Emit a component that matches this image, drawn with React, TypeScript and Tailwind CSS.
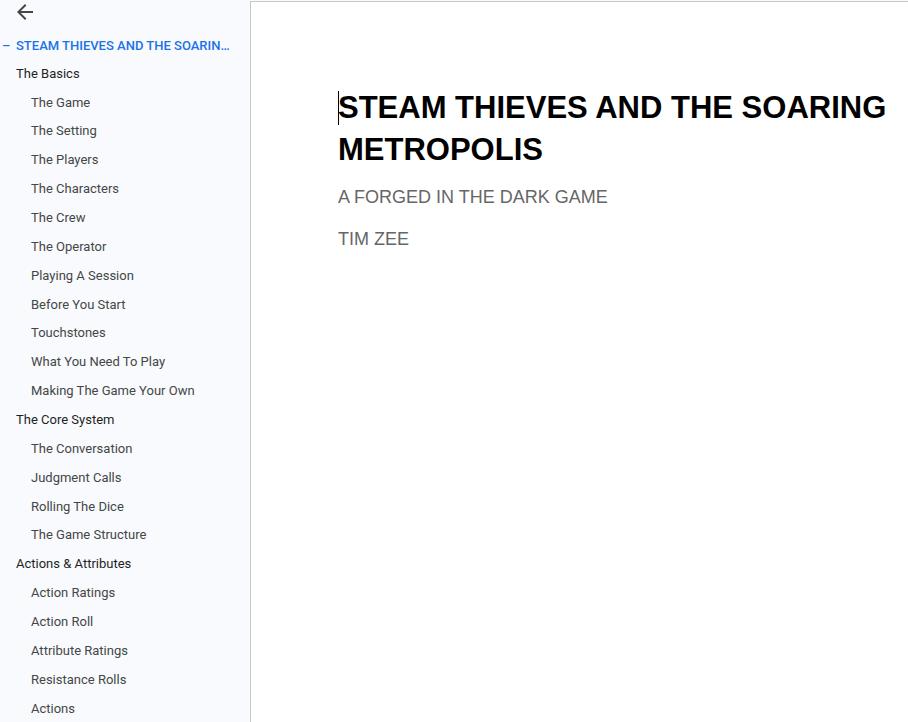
import React from "react";

const items: [number, string][] = [
  [1, "The Basics"],
  [2, "The Game"],
  [2, "The Setting"],
  [2, "The Players"],
  [2, "The Characters"],
  [2, "The Crew"],
  [2, "The Operator"],
  [2, "Playing A Session"],
  [2, "Before You Start"],
  [2, "Touchstones"],
  [2, "What You Need To Play"],
  [2, "Making The Game Your Own"],
  [1, "The Core System"],
  [2, "The Conversation"],
  [2, "Judgment Calls"],
  [2, "Rolling The Dice"],
  [2, "The Game Structure"],
  [1, "Actions & Attributes"],
  [2, "Action Ratings"],
  [2, "Action Roll"],
  [2, "Attribute Ratings"],
  [2, "Resistance Rolls"],
  [2, "Actions"],
];

export default function App() {
  return (
    <div className="flex h-[722px] w-[908px] overflow-hidden bg-[#f8fafd]">
      <aside className="w-[250px] shrink-0 overflow-hidden font-['Roboto',sans-serif] text-[13px] text-[#444746]">
        <div className="flex h-[24px] items-center pl-[13px]">
          <svg width="24" height="24" viewBox="0 0 24 24" fill="#444746">
            <path d="M20 11H7.83l5.59-5.59L12 4l-8 8 8 8 1.41-1.41L7.83 13H20v-2z" />
          </svg>
        </div>
        <div className="mt-[8px] flex h-[27px] items-center font-medium text-[#1a73e8]">
          <span className="w-[16px] pl-[2px]">–</span>
          <span className="whitespace-nowrap">STEAM THIEVES AND THE SOARIN…</span>
        </div>
        {items.map(([lvl, t], i) => (
          <div
            key={i}
            className={
              "flex h-[28.86px] items-center whitespace-nowrap " +
              (lvl === 1 ? "pl-[16px] text-[#1f1f1f]" : "pl-[31px]")
            }
          >
            {t}
          </div>
        ))}
      </aside>
      <main className="flex-1 pt-[1px]">
        <div className="h-full border-l border-t border-[#c7c7c7] bg-white pl-[87px] pt-[85px] font-['Liberation_Sans',Arial,sans-serif]">
          <div className="relative">
            <span className="absolute left-0 top-[4px] h-[34px] w-px bg-[#000]" />
            <h1 className="w-[600px] text-[31px] font-bold leading-[42px] text-black">
              STEAM THIEVES AND THE SOARING METROPOLIS
            </h1>
          </div>
          <p className="mt-[14px] text-[18px] leading-[24px] text-[#666666]">A FORGED IN THE DARK GAME</p>
          <p className="mt-[18px] text-[18px] leading-[24px] text-[#666666]">TIM ZEE</p>
        </div>
      </main>
    </div>
  );
}
